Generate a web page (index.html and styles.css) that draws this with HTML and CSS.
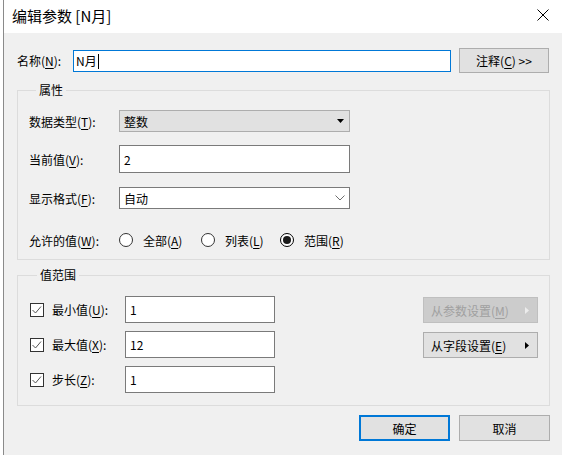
FILE: index.html
```html
<!DOCTYPE html>
<html lang="zh-CN">
<head>
<meta charset="utf-8">
<title>编辑参数 [N月]</title>
<link rel="stylesheet" href="styles.css">
</head>
<body>
<div class="screen">
  <div class="edge"></div>
  <div class="window">
    <div class="titlebar">
      <span class="title">编辑参数 [N月]</span>
      <svg class="close" width="12" height="12" viewBox="0 0 12 12"><path d="M0.5 0.5L11.5 11.5M11.5 0.5L0.5 11.5" stroke="#000" stroke-width="1"/></svg>
    </div>
    <div class="content">
      <div class="name-row">
        <span class="name-label">名称(<u>N</u>):</span>
        <div class="name-input">N月<span class="caret"></span></div>
        <div class="btn comment-btn">注释(<u>C</u>) &gt;&gt;</div>
      </div>

      <fieldset class="group g1">
        <legend>属性</legend>
        <div class="row r1">
          <span class="label">数据类型(<u>T</u>):</span>
          <div class="ctl dropdown"><span>整数</span><svg width="7" height="4" viewBox="0 0 7 4"><path d="M0 0H7L3.5 4Z" fill="#000"/></svg></div>
        </div>
        <div class="row r2">
          <span class="label">当前值(<u>V</u>):</span>
          <div class="ctl textbox tall">2</div>
        </div>
        <div class="row r3">
          <span class="label">显示格式(<u>F</u>):</span>
          <div class="ctl combo"><span>自动</span><svg width="10" height="6" viewBox="0 0 10 6"><path d="M0.5 0.5L5 5L9.5 0.5" stroke="#6e6e6e" fill="none"/></svg></div>
        </div>
        <div class="row r4">
          <span class="label">允许的值(<u>W</u>):</span>
          <div class="radios">
            <span class="radio"></span><span class="rlabel r-all">全部(<u>A</u>)</span>
            <span class="radio"></span><span class="rlabel r-list">列表(<u>L</u>)</span>
            <span class="radio checked"></span><span class="rlabel">范围(<u>R</u>)</span>
          </div>
        </div>
      </fieldset>

      <fieldset class="group g2">
        <legend>值范围</legend>
        <div class="vrow first">
          <span class="check"><svg width="12" height="12" viewBox="0 0 12 12"><path d="M1.5 6L4.5 9L10 2.5" stroke="#555" fill="none" stroke-width="1"/></svg></span>
          <span class="vlabel">最小值(<u>U</u>):</span>
          <div class="vinput">1</div>
          <div class="btn side-btn disabled">从参数设置(<u>M</u>)<svg width="4" height="7" viewBox="0 0 4 7"><path d="M0 0L4 3.5L0 7Z" fill="#ececec"/></svg></div>
        </div>
        <div class="vrow">
          <span class="check"><svg width="12" height="12" viewBox="0 0 12 12"><path d="M1.5 6L4.5 9L10 2.5" stroke="#555" fill="none" stroke-width="1"/></svg></span>
          <span class="vlabel">最大值(<u>X</u>):</span>
          <div class="vinput">12</div>
          <div class="btn side-btn">从字段设置(<u>E</u>)<svg width="4" height="7" viewBox="0 0 4 7"><path d="M0 0L4 3.5L0 7Z" fill="#000"/></svg></div>
        </div>
        <div class="vrow">
          <span class="check"><svg width="12" height="12" viewBox="0 0 12 12"><path d="M1.5 6L4.5 9L10 2.5" stroke="#555" fill="none" stroke-width="1"/></svg></span>
          <span class="vlabel">步长(<u>Z</u>):</span>
          <div class="vinput">1</div>
        </div>
      </fieldset>

      <div class="footer">
        <div class="btn foot-btn default">确定</div>
        <div class="btn foot-btn">取消</div>
      </div>
    </div>
  </div>
</div>
</body>
</html>
```

FILE: styles.css
```css
* { box-sizing: border-box; }
html, body { margin: 0; padding: 0; }
body {
  font-family: "Noto Sans CJK SC", "Noto Sans", sans-serif;
  font-size: 12px;
  color: #000;
  background: #fff;
}
u { text-decoration: underline; text-underline-offset: 2px; }

.screen {
  display: flex;
  width: 562px;
  height: 455px;
  overflow: hidden;
}
.edge {
  width: 4px;
  flex: none;
  background: #fff;
  border-right: 1px solid #8a8a8a;
}
.window {
  flex: 1;
  display: flex;
  flex-direction: column;
  background: #f0f0f0;
}
.titlebar {
  height: 33px;
  flex: none;
  background: #fff;
  display: flex;
  align-items: flex-start;
  padding-left: 8px;
}
.title {
  font-size: 15px;
  line-height: 20px;
  margin-top: 6px;
}
.close {
  margin-left: auto;
  margin-right: 13px;
  margin-top: 9px;
}

.content {
  padding: 15px 12px 0 13px;
}

.name-row {
  display: flex;
  align-items: flex-start;
  height: 25px;
  padding-right: 1px;
}
.name-label {
  width: 56px;
  line-height: 25px;
  flex: none;
}
.name-input {
  flex: 1;
  height: 22px;
  margin-top: 2px;
  border: 1px solid #0078d7;
  background: #fff;
  padding-left: 2px;
  line-height: 20px;
  display: flex;
  align-items: center;
}
.caret {
  display: inline-block;
  width: 1px;
  height: 15px;
  background: #000;
  margin-left: 1px;
}
.btn {
  background: #e1e1e1;
  border: 1px solid #adadad;
  display: flex;
  align-items: center;
  justify-content: center;
}
.comment-btn {
  width: 90px;
  height: 25px;
  margin-left: 8px;
  flex: none;
}

.group {
  margin: 0;
  border: 1px solid #dcdcdc;
  padding: 0;
  min-width: 0;
}
.group legend {
  margin-left: 7px;
  padding: 0 3px;
  line-height: 16px;
  font-size: 12px;
}
.g1 { margin-top: 9px; padding: 0 0 8px 11px; }
.g2 { margin-top: 7px; padding: 0 11px 12px 12px; }

.row {
  display: flex;
  align-items: center;
}
.label { width: 90px; flex: none; }
.r1 { margin-top: 12px; height: 22px; }
.r2 { margin-top: 13px; height: 28px; }
.r3 { margin-top: 14px; height: 22px; }
.r4 { margin-top: 20px; height: 22px; }

.ctl {
  width: 231px;
  height: 100%;
  display: flex;
  align-items: center;
  padding-left: 4px;
}
.dropdown {
  background: #e1e1e1;
  border: 1px solid #adadad;
  justify-content: space-between;
  padding-right: 5px;
}
.textbox {
  background: #fff;
  border: 1px solid #7a7a7a;
}
.combo {
  background: #fff;
  border: 1px solid #7a7a7a;
  justify-content: space-between;
  padding-right: 4px;
}

.radios {
  display: flex;
  align-items: center;
}
.radio {
  width: 14px;
  height: 14px;
  border: 1px solid #333;
  border-radius: 50%;
  background: #fff;
  display: flex;
  align-items: center;
  justify-content: center;
  margin-right: 10px;
  flex: none;
}
.radio.checked { border-color: #000; }
.radio.checked::after {
  content: "";
  width: 8px;
  height: 8px;
  border-radius: 50%;
  background: #1a1a1a;
}
.rlabel { flex: none; }
.r-all { width: 58px; }
.r-list { width: 55px; }

.vrow {
  display: flex;
  align-items: center;
  height: 27px;
  margin-top: 8px;
}
.vrow.first { margin-top: 13px; }
.check {
  width: 14px;
  height: 14px;
  border: 1px solid #333;
  background: #fff;
  display: flex;
  align-items: center;
  justify-content: center;
  flex: none;
}
.vlabel {
  width: 73px;
  margin-left: 8px;
  flex: none;
}
.vinput {
  width: 150px;
  height: 27px;
  border: 1px solid #7a7a7a;
  background: #fff;
  padding-left: 4px;
  display: flex;
  align-items: center;
}
.side-btn {
  margin-left: auto;
  width: 115px;
  height: 26px;
  align-self: flex-start;
  margin-top: 1px;
  justify-content: flex-start;
  padding-left: 7px;
}
.side-btn svg { margin-left: auto; margin-right: 8px; }
.side-btn.disabled {
  background: #cccccc;
  border-color: #bfbfbf;
  color: #a0a0a0;
}

.footer {
  display: flex;
  justify-content: flex-end;
  margin-top: 9px;
  gap: 9px;
}
.foot-btn {
  width: 91px;
  height: 26px;
}
.foot-btn.default {
  border: 2px solid #0078d7;
}
```
